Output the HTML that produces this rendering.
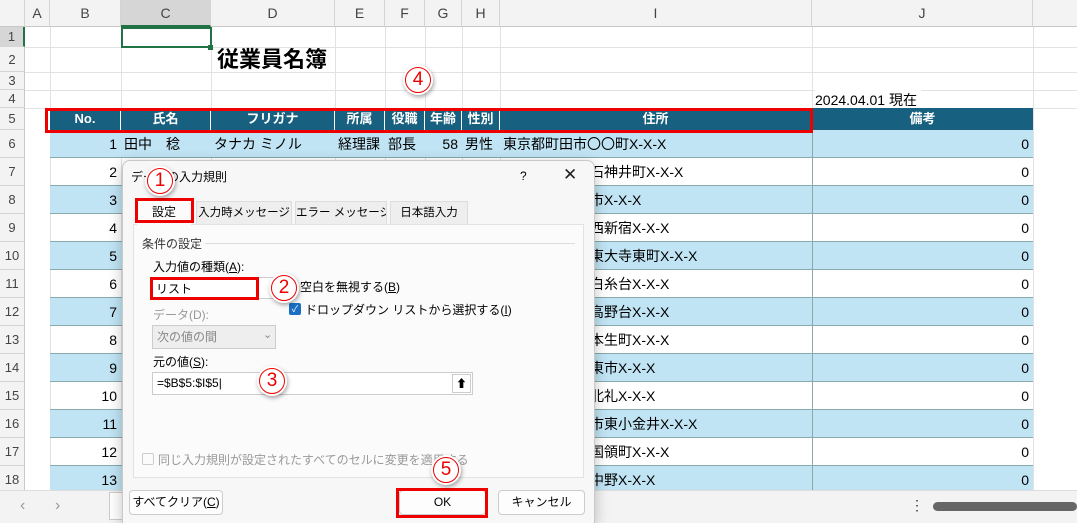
<!DOCTYPE html>
<html style="width:1077px;height:523px;overflow:hidden"><head><meta charset="utf-8"><style>
*{margin:0;padding:0;box-sizing:border-box}
body{width:1077px;height:523px;overflow:hidden;background:#fff;position:relative;font-family:"Liberation Sans","Noto Sans CJK JP",sans-serif;font-size:14px;color:#000}
.a{position:absolute}
.ch{position:absolute;top:0;height:27px;line-height:27px;text-align:center;color:#444;font-size:14px;border-right:1px solid #d4d4d4;background:#f3f3f3;border-bottom:1px solid #c8c8c8}
.rh{position:absolute;left:0;width:25px;text-align:center;color:#444;font-size:13px;background:#f3f3f3;border-bottom:1px solid #d4d4d4;border-right:1px solid #c8c8c8}
.hl{position:absolute;left:25px;right:0;height:1px;background:#e2e2e2}
.vl{position:absolute;top:27px;bottom:0;width:1px;background:#e2e2e2}
.row{position:absolute;left:50px;width:983px;height:28px;border-bottom:1px solid #8aa}
.row.b{background:#c0e4f4}
.row span{position:absolute;top:0;line-height:28px;font-size:14px}
.hdr span{position:absolute;top:0;height:22px;line-height:22px;text-align:center;color:#fff;font-weight:bold;font-size:13px;border-right:1px solid #fff}
.red{position:absolute;border:3px solid #e00;}
.circ{position:absolute;width:30px;height:30px;border-radius:50%;background:#fff;box-shadow:1px 2px 4px rgba(0,0,0,.35);color:#e00;font-size:22px;line-height:30px;text-align:center}
.circ i{font-style:normal;display:block;width:26px;height:26px;margin:2px;border:1.5px solid #e00;border-radius:50%;line-height:23px;font-size:19px}
.dlg{position:absolute;left:122px;top:160px;width:473px;height:363px;background:#f7f7f7;border:1px solid #c9c9c9;border-bottom:none;border-radius:8px 8px 0 0;box-shadow:0 4px 14px rgba(0,0,0,.25)}
.btn{position:absolute;height:25px;background:#fdfdfd;border:1px solid #ccc;border-radius:4px;text-align:center;line-height:23px;font-size:12px}
.tab{position:absolute;top:201px;height:24px;background:#eee;border:1px solid #ddd;font-size:11.5px;text-align:center;line-height:22px;white-space:nowrap;overflow:hidden}
</style></head><body>
<div class="ch" style="left:0;width:25px;background:#f3f3f3"></div>
<div class="ch" style="left:25px;width:25px">A</div>
<div class="ch" style="left:50px;width:71px">B</div>
<div class="ch" style="left:121px;width:90px;background:#d6d6d6;border-bottom:2px solid #217346">C</div>
<div class="ch" style="left:211px;width:124px">D</div>
<div class="ch" style="left:335px;width:50px">E</div>
<div class="ch" style="left:385px;width:40px">F</div>
<div class="ch" style="left:425px;width:37px">G</div>
<div class="ch" style="left:462px;width:38px">H</div>
<div class="ch" style="left:500px;width:312px">I</div>
<div class="ch" style="left:812px;width:221px">J</div>
<div class="ch" style="left:1033px;width:44px;border-right:none"></div>
<div class="rh" style="top:27px;height:20px;line-height:20px;background:#d6d6d6;border-right:2px solid #217346">1</div>
<div class="rh" style="top:47px;height:25px;line-height:25px">2</div>
<div class="rh" style="top:72px;height:18px;line-height:18px">3</div>
<div class="rh" style="top:90px;height:18px;line-height:18px">4</div>
<div class="rh" style="top:108px;height:22px;line-height:22px">5</div>
<div class="rh" style="top:130px;height:28px;line-height:28px">6</div>
<div class="rh" style="top:158px;height:28px;line-height:28px">7</div>
<div class="rh" style="top:186px;height:28px;line-height:28px">8</div>
<div class="rh" style="top:214px;height:28px;line-height:28px">9</div>
<div class="rh" style="top:242px;height:28px;line-height:28px">10</div>
<div class="rh" style="top:270px;height:28px;line-height:28px">11</div>
<div class="rh" style="top:298px;height:28px;line-height:28px">12</div>
<div class="rh" style="top:326px;height:28px;line-height:28px">13</div>
<div class="rh" style="top:354px;height:28px;line-height:28px">14</div>
<div class="rh" style="top:382px;height:28px;line-height:28px">15</div>
<div class="rh" style="top:410px;height:28px;line-height:28px">16</div>
<div class="rh" style="top:438px;height:28px;line-height:28px">17</div>
<div class="rh" style="top:466px;height:28px;line-height:28px">18</div>
<div class="hl" style="top:47px"></div><div class="hl" style="top:72px"></div><div class="hl" style="top:90px"></div><div class="hl" style="top:108px"></div>
<div class="vl" style="left:50px"></div><div class="vl" style="left:121px"></div><div class="vl" style="left:211px"></div><div class="vl" style="left:335px"></div><div class="vl" style="left:385px"></div><div class="vl" style="left:425px"></div><div class="vl" style="left:462px"></div><div class="vl" style="left:500px"></div><div class="vl" style="left:812px"></div><div class="vl" style="left:1033px"></div>
<div class="a" style="left:121px;top:27px;width:91px;height:21px;border:2px solid #217346"></div>
<div class="a" style="left:208px;top:45px;width:5px;height:5px;background:#217346"></div>
<div class="a" style="left:217px;top:45px;font-size:22px;font-weight:bold;line-height:30px">従業員名簿</div>
<div class="a" style="left:815px;top:90px;line-height:20px;font-size:14px;background:#fff;padding-right:4px">2024.04.01 現在</div>
<div class="a hdr" style="left:50px;top:108px;width:983px;height:22px;background:#17607f">
<span style="left:0;width:71px">No.</span><span style="left:71px;width:90px">氏名</span><span style="left:161px;width:124px">フリガナ</span><span style="left:285px;width:50px">所属</span><span style="left:335px;width:40px">役職</span><span style="left:375px;width:37px">年齢</span><span style="left:412px;width:38px">性別</span><span style="left:450px;width:312px">住所</span><span style="left:762px;width:221px;border:none">備考</span></div>
<div class="row b" style="top:130px"><span style="left:0;width:67px;text-align:right">1</span><span style="left:74px">田中　稔</span><span style="left:164px">タナカ ミノル</span><span style="left:288px">経理課</span><span style="left:338px">部長</span><span style="left:375px;width:33px;text-align:right">58</span><span style="left:415px">男性</span><span style="left:453px">東京都町田市〇〇町X-X-X</span><span style="left:762px;width:217px;text-align:right">0</span></div>
<div class="row" style="top:158px"><span style="left:0;width:67px;text-align:right">2</span><span style="left:540px">石神井町X-X-X</span><span style="left:762px;width:217px;text-align:right">0</span></div>
<div class="row b" style="top:186px"><span style="left:0;width:67px;text-align:right">3</span><span style="left:540px">市X-X-X</span><span style="left:762px;width:217px;text-align:right">0</span></div>
<div class="row" style="top:214px"><span style="left:0;width:67px;text-align:right">4</span><span style="left:540px">西新宿X-X-X</span><span style="left:762px;width:217px;text-align:right">0</span></div>
<div class="row b" style="top:242px"><span style="left:0;width:67px;text-align:right">5</span><span style="left:540px">東大寺東町X-X-X</span><span style="left:762px;width:217px;text-align:right">0</span></div>
<div class="row" style="top:270px"><span style="left:0;width:67px;text-align:right">6</span><span style="left:540px">白糸台X-X-X</span><span style="left:762px;width:217px;text-align:right">0</span></div>
<div class="row b" style="top:298px"><span style="left:0;width:67px;text-align:right">7</span><span style="left:540px">高野台X-X-X</span><span style="left:762px;width:217px;text-align:right">0</span></div>
<div class="row" style="top:326px"><span style="left:0;width:67px;text-align:right">8</span><span style="left:540px">本生町X-X-X</span><span style="left:762px;width:217px;text-align:right">0</span></div>
<div class="row b" style="top:354px"><span style="left:0;width:67px;text-align:right">9</span><span style="left:540px">東市X-X-X</span><span style="left:762px;width:217px;text-align:right">0</span></div>
<div class="row" style="top:382px"><span style="left:0;width:67px;text-align:right">10</span><span style="left:540px">北礼X-X-X</span><span style="left:762px;width:217px;text-align:right">0</span></div>
<div class="row b" style="top:410px"><span style="left:0;width:67px;text-align:right">11</span><span style="left:540px">市東小金井X-X-X</span><span style="left:762px;width:217px;text-align:right">0</span></div>
<div class="row" style="top:438px"><span style="left:0;width:67px;text-align:right">12</span><span style="left:540px">国領町X-X-X</span><span style="left:762px;width:217px;text-align:right">0</span></div>
<div class="row b" style="top:466px"><span style="left:0;width:67px;text-align:right">13</span><span style="left:540px">中野X-X-X</span><span style="left:762px;width:217px;text-align:right">0</span></div>
<div class="a" style="top:130px;width:1px;height:364px;background:#8aa;left:812px"></div>
<div class="a" style="left:0;top:490px;width:1077px;height:33px;background:#f3f3f3;border-top:1px solid #ddd"></div>
<div class="a" style="left:20px;top:497px;color:#999;font-size:16px">‹</div>
<div class="a" style="left:55px;top:497px;color:#999;font-size:16px">›</div>
<div class="a" style="left:109px;top:492px;width:20px;height:28px;background:#fff;border:1px solid #ccc"></div>
<div class="a" style="left:910px;top:497px;font-size:14px;color:#333">⋮</div>
<div class="a" style="left:933px;top:502px;width:144px;height:9px;border-radius:5px;background:#666"></div>
<div class="red" style="left:45px;top:108px;width:768px;height:25px"></div>
<div class="dlg"></div>
<div class="a" style="left:131px;top:169px;font-size:12px;line-height:16px">データの入力規則</div>
<div class="a" style="left:520px;top:169px;font-size:12px">?</div>
<div class="a" style="left:563px;top:165px;font-size:17px;color:#222">✕</div>
<div class="tab" style="left:196px;width:96px">入力時メッセージ</div>
<div class="tab" style="left:295px;width:92px">エラー メッセージ</div>
<div class="tab" style="left:390px;width:78px">日本語入力</div>
<div class="a" style="left:133px;top:224px;width:451px;height:254px;background:#fbfbfb;border:1px solid #e2e2e2"></div>
<div class="a" style="left:137px;top:199px;width:54px;height:26px;background:#fbfbfb;font-size:12px;text-align:center;line-height:26px">設定</div>
<div class="red" style="left:135px;top:198px;width:59px;height:25px"></div>
<div class="a" style="left:142px;top:235px;font-size:12px;color:#333">条件の設定</div>
<div class="a" style="left:205px;top:243px;width:370px;height:1px;background:#ddd"></div>
<div class="a" style="left:153px;top:258px;font-size:12px">入力値の種類(<u>A</u>):</div>
<div class="a" style="left:152px;top:277px;width:124px;height:22px;background:#fff;border:1px solid #ccc"></div>
<div class="a" style="left:156px;top:280px;font-size:12px">リスト</div>
<div class="red" style="left:150px;top:277px;width:109px;height:23px"></div>
<div class="a" style="left:300px;top:278px;font-size:12px">空白を無視する(<u>B</u>)</div>
<div class="a" style="left:289px;top:303px;width:12px;height:12px;background:#1a6fc4;border-radius:2px;color:#fff;font-size:9px;line-height:12px;text-align:center">✓</div>
<div class="a" style="left:305px;top:301px;font-size:12px">ドロップダウン リストから選択する(<u>I</u>)</div>
<div class="a" style="left:153px;top:306px;font-size:12px;color:#999">データ(D):</div>
<div class="a" style="left:152px;top:325px;width:124px;height:24px;background:#eee;border:1px solid #ccc;font-size:12px;color:#888;line-height:22px;padding-left:4px">次の値の間</div>
<div class="a" style="left:263px;top:328px;font-size:11px;color:#888">⌄</div>
<div class="a" style="left:153px;top:353px;font-size:12px">元の値(<u>S</u>):</div>
<div class="a" style="left:152px;top:372px;width:321px;height:23px;background:#fff;border:1px solid #ccc;font-size:12px;line-height:21px;padding-left:4px">=$B$5:$I$5|</div>
<div class="a" style="left:452px;top:374px;width:19px;height:19px;border:1px solid #ccc;background:#fff;font-size:11px;text-align:center;line-height:18px;font-weight:bold">⬆</div>
<div class="a" style="left:142px;top:453px;width:12px;height:12px;border:1px solid #ccc;border-radius:2px"></div>
<div class="a" style="left:158px;top:451px;font-size:12px;color:#999">同じ入力規則が設定されたすべてのセルに変更を適用する</div>
<div class="btn" style="left:129px;top:490px;width:94px">すべてクリア(<u>C</u>)</div>
<div class="btn" style="left:399px;top:490px;width:87px">OK</div>
<div class="btn" style="left:498px;top:490px;width:87px">キャンセル</div>
<div class="red" style="left:396px;top:488px;width:92px;height:30px"></div>
<div class="circ" style="left:145px;top:166px"><i>1</i></div>
<div class="circ" style="left:269px;top:273px"><i>2</i></div>
<div class="circ" style="left:257px;top:366px"><i>3</i></div>
<div class="circ" style="left:403px;top:65px"><i>4</i></div>
<div class="circ" style="left:431px;top:455px"><i>5</i></div>
</body></html>
